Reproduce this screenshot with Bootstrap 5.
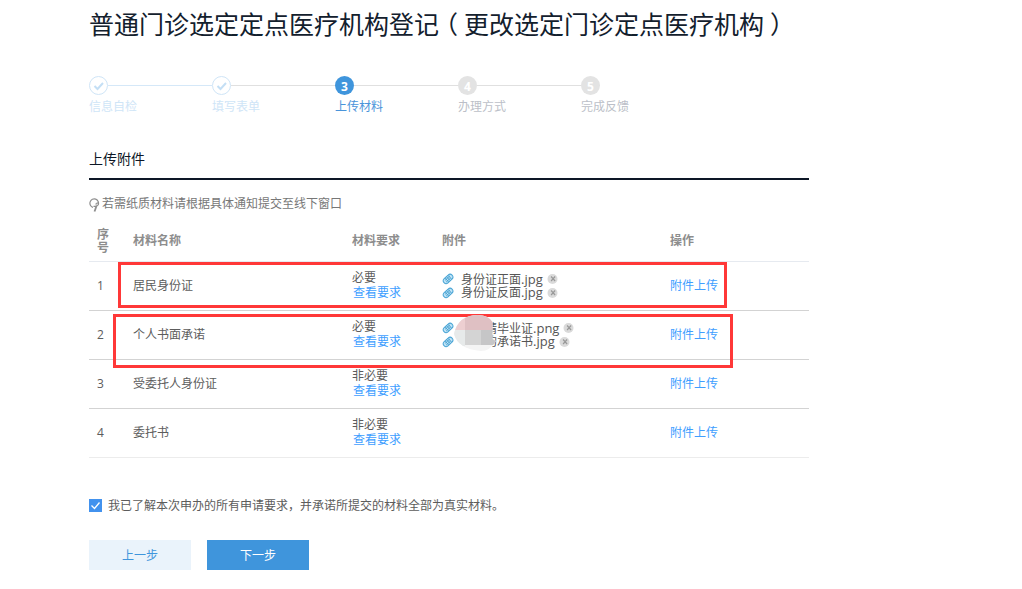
<!DOCTYPE html>
<html lang="zh-CN">
<head>
<meta charset="utf-8">
<meta name="viewport" content="width=device-width, initial-scale=1">
<title>上传材料</title>
<link href="https://cdn.jsdelivr.net/npm/bootstrap@5.3.0/dist/css/bootstrap.min.css" rel="stylesheet">
<style>
body{font:12px/15px "Open Sans","Noto Sans CJK SC",sans-serif;color:#5c5c5c;height:589px;overflow:hidden}
.page{width:720px;margin-left:89px;padding-top:6px}
h1{font-size:25px;line-height:36px;font-weight:400;color:#13202d;white-space:nowrap;height:70px}
.paren{display:inline-block;width:25px;text-indent:-6px}
.paren-end{text-indent:6px}
.step{width:123px;color:#bcbfc8}
.step:last-child{width:60px}
.dot{width:19px;height:19px;border-radius:50%;background:#e3e3e3;color:#fff;font-weight:700;font-size:12px;line-height:21px;text-align:center;flex:none}
.bar{height:1px;background:#e0e0e0;flex:1}
.done{color:#cfe5f7}
.done .dot{background:#fff;border:1px solid #cfe5f7}
.done .bar{background:#d5e8f8}
.done + .done .bar{background:#e0e0e0}
.now{color:#4a94da}
.now .dot{background:#3f95dc}
.label-line{line-height:16px;margin-top:4px}
h2{font-size:14px;line-height:20px;font-weight:400;color:#0d1726;border-bottom:2px solid #0d1726;height:31px;margin:34px 0 15px}
.tip{color:#777;height:17px;line-height:17px}
.materials{table-layout:fixed;width:720px;border-collapse:separate;border-spacing:0}
.materials th{height:50px;border-bottom:1px solid #e6eaf0;color:#8d8d8d;font-weight:700;padding:8px 8px 0;line-height:13px}
.materials td{height:49px;border-bottom:1px solid #d3d3d3;padding:0 8px 2px}
.materials td.files{padding-bottom:0}
.materials tr:last-child td{border-color:#ececec}
.materials a,.materials a:hover{color:#409eff;text-decoration:none}
.materials .view{margin-left:1px}
.file{height:13.5px;line-height:13px;color:#555}
.file svg{flex:none}
.clip-gap{margin-right:7px}
.ext{font-size:13px}
.hidden-part{width:31px;height:12px}
.frame{position:absolute;border:3px solid #ff3838}
.frame-a{left:118px;top:262px;width:609px;height:46px}
.frame-b{left:113px;top:314px;width:620px;height:54px}
.blur-spot{position:absolute;left:454px;top:315px}
.agree{margin-top:40px;height:16px;line-height:16px}
.agree svg{margin-bottom:1px}
.agree span{margin-left:6px}
.steps-nav{margin-top:26px}
.btn-step{width:102px;height:30px;padding:2px 0 0;font-size:12px;line-height:28px;border:0;border-radius:0}
.prev{background:#eaf3fb;color:#3f95dc}
.next{background:#3f95dc;color:#fff}
</style>
</head>
<body class="bg-white position-relative">
<svg class="d-none">
<symbol id="clip" viewBox="0 0 12 12"><g transform="rotate(-43 6 6)"><rect x=".6" y="3.2" width="11" height="5.6" rx="2.8" fill="#bfe3f6" stroke="#4aa5d5" stroke-width="1"/><path d="M3 5h6.500M2.500 7h6M4.500 3.500v5M6.500 3.500v5M8.500 3.500v5" stroke="#3f9dce" stroke-width=".8" fill="none"/></g></symbol>
<symbol id="del" viewBox="0 0 10 10"><circle cx="5" cy="5" r="5" fill="#dadada"/><path d="M3.600 2.500l4 4.500M7.600 2.500l-4 4.500" stroke="#999" stroke-width="1.200"/></symbol>
</svg>
<main class="page">
<h1 class="m-0">普通门诊选定定点医疗机构登记<span class="paren">（</span>更改选定门诊定点医疗机构<span class="paren paren-end">）</span></h1>
<div class="d-flex">
<div class="step done"><div class="d-flex align-items-center"><span class="dot"><svg class="d-block" width="17" height="17" fill="none"><path d="M4.500 9l3 3 5.500-6" stroke="#c4dff5" stroke-width="2"/></svg></span><span class="bar"></span></div><div class="label-line">信息自检</div></div>
<div class="step done"><div class="d-flex align-items-center"><span class="dot"><svg class="d-block" width="17" height="17" fill="none"><path d="M4.500 9l3 3 5.500-6" stroke="#c4dff5" stroke-width="2"/></svg></span><span class="bar"></span></div><div class="label-line">填写表单</div></div>
<div class="step now"><div class="d-flex align-items-center"><span class="dot">3</span><span class="bar"></span></div><div class="label-line">上传材料</div></div>
<div class="step"><div class="d-flex align-items-center"><span class="dot">4</span><span class="bar"></span></div><div class="label-line">办理方式</div></div>
<div class="step"><div class="d-flex align-items-center"><span class="dot">5</span></div><div class="label-line">完成反馈</div></div>
</div>
<h2>上传附件</h2>
<div class="tip d-flex"><svg width="13" height="17" fill="none" stroke="#8e8e8e" stroke-width="1.200"><path d="M4 12.300A4.300 4.300 0 1 1 9.200 9.800Q8 11 6.500 11.300h-2M8.500 7.500Q8 9 6.500 9.200"/><path d="M7.500 11L5.500 16.500" stroke-width="1.800"/></svg><span>若需纸质材料请根据具体通知提交至线下窗口</span></div>
<table class="materials">
<colgroup><col style="width:36px"><col style="width:219px"><col style="width:90px"><col style="width:228px"><col></colgroup>
<thead><tr><th>序号</th><th>材料名称</th><th>材料要求</th><th>附件</th><th>操作</th></tr></thead>
<tbody>
<tr><td>1</td><td>居民身份证</td><td>必要<br><a href="#" class="view">查看要求</a></td><td class="files">
<div class="file d-flex align-items-center"><svg width="12" height="12" class="clip-gap"><use href="#clip"/></svg><span>身份证正面<span class="ext">.jpg</span></span><svg width="11" height="10" class="ms-1"><use href="#del"/></svg></div>
<div class="file d-flex align-items-center"><svg width="12" height="12" class="clip-gap"><use href="#clip"/></svg><span>身份证反面<span class="ext">.jpg</span></span><svg width="11" height="10" class="ms-1"><use href="#del"/></svg></div></td><td><a href="#">附件上传</a></td></tr>
<tr><td>2</td><td>个人书面承诺</td><td>必要<br><a href="#" class="view">查看要求</a></td><td class="files">
<div class="file d-flex align-items-center"><svg width="12" height="12"><use href="#clip"/></svg><span class="hidden-part"></span><span>精毕业证<span class="ext">.png</span></span><svg width="11" height="10" class="ms-1"><use href="#del"/></svg></div>
<div class="file d-flex align-items-center"><svg width="12" height="12"><use href="#clip"/></svg><span class="hidden-part"></span><span>的承诺书<span class="ext">.jpg</span></span><svg width="11" height="10" class="ms-1"><use href="#del"/></svg></div></td><td><a href="#">附件上传</a></td></tr>
<tr><td>3</td><td>受委托人身份证</td><td>非必要<br><a href="#" class="view">查看要求</a></td><td></td><td><a href="#">附件上传</a></td></tr>
<tr><td>4</td><td>委托书</td><td>非必要<br><a href="#" class="view">查看要求</a></td><td></td><td><a href="#">附件上传</a></td></tr>
</tbody>
</table>
<div class="agree d-flex align-items-center"><svg width="13" height="13"><path fill="#4292ee" d="M0 0h13v13H0z"/><path d="M2.500 6.500l3 3 5-6" fill="none" stroke="#fff" stroke-width="1.300"/></svg><span>我已了解本次申办的所有申请要求，并承诺所提交的材料全部为真实材料。</span></div>
<div class="steps-nav d-flex gap-3"><button class="btn btn-step prev">上一步</button><button class="btn btn-step next">下一步</button></div>
</main>
<div class="frame frame-a"></div>
<div class="frame frame-b"></div>
<svg class="blur-spot" width="44" height="36"><defs><clipPath id="spot"><path d="M0 19Q4 0 24 0Q34 0 38.500 7V24L42 26Q36 36 27 36Q4 34 0 19"/></clipPath></defs><g clip-path="url(#spot)"><path fill="#f4f4f4" d="M0 0h44v36H0z"/><path fill="#edcfd1" d="M0 0h11v15H0z"/><path fill="#dfc0c3" d="M11 0h33v15H11z"/><path fill="#e7eaea" d="M0 15h11v16H0z"/><path fill="#d4d4d4" d="M11 15h16v15H11z"/><path fill="#c6c6c7" d="M27 15h17v15H27z"/></g></svg>
</body>
</html>
